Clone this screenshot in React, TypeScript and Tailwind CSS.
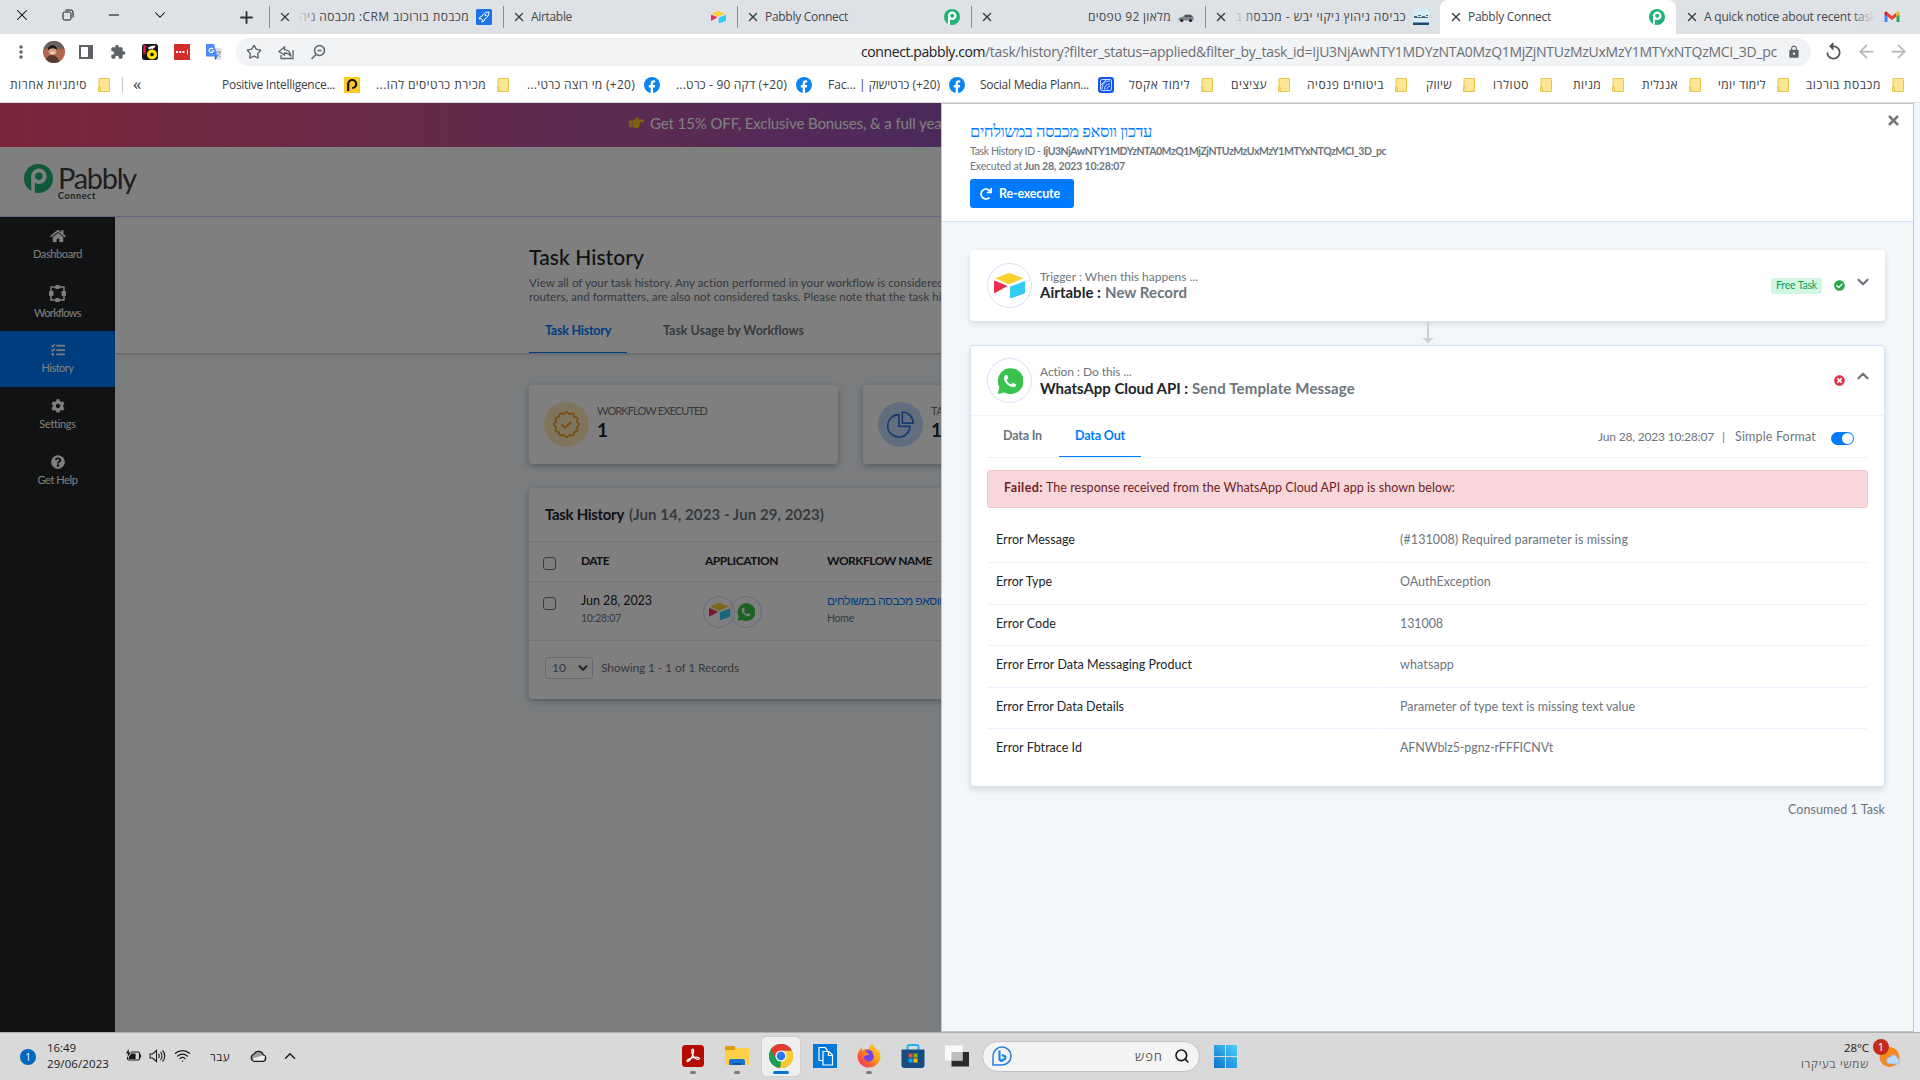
import { useLayoutEffect, useRef, useState } from "react";
import type { ReactNode } from "react";
import { ArrowLeft, ArrowRight, ChevronDown, ChevronUp, Minus, Plus, Search, Star, Wifi, X } from "lucide-react";
import {
  FaCheckCircle,
  FaCog,
  FaFirefoxBrowser,
  FaHandPointRight,
  FaHome,
  FaQuestionCircle,
  FaRedo,
  FaTasks,
  FaTimesCircle,
} from "react-icons/fa";
import { MdExtension, MdLock, MdMoreVert, MdReplay } from "react-icons/md";

const SEGOE = "font-['Open_Sans','Noto_Sans','Liberation_Sans',sans-serif]";
const AVENIR = "font-['Lato','Liberation_Sans',sans-serif]";

// Single line of text, tracked so that it fills the given width
function Line({ w, className = "", children }: { w: number; className?: string; children: ReactNode }) {
  const ref = useRef<HTMLSpanElement>(null);
  const [spacing, setSpacing] = useState(0);
  useLayoutEffect(() => {
    const el = ref.current;
    if (!el) return;
    const count = el.textContent?.length ?? 0;
    if (count > 1) setSpacing((w - el.getBoundingClientRect().width) / count);
  }, [w]);
  return (
    <span ref={ref} className={`inline-block shrink-0 whitespace-pre ${className}`} style={{ letterSpacing: spacing }}>
      {children}
    </span>
  );
}

/* ---------- logos ---------- */

const PabblyMark = ({ className = "" }: { className?: string }) => (
  <svg viewBox="0 0 32 32" className={`shrink-0 ${className}`}>
    <circle cx="16" cy="16" r="16" fill="#20b276" />
    <path d="M8 14v16.5a16 16 0 0 0 4 1.2V21z" fill="#fff" />
    <circle cx="16.4" cy="13.6" r="8.6" fill="#fff" />
    <circle cx="16.4" cy="13.6" r="4.1" fill="#20b276" />
  </svg>
);

const AirtableMark = ({ className = "" }: { className?: string }) => (
  <svg viewBox="0 0 93 76" className={`shrink-0 ${className}`}>
    <path d="M4 16 42 1q4-1 8 0l38 15-38 16q-4 2-9 0z" fill="#f8d030" />
    <path d="M0 25q1-3 4-2l37 16-38 21q-3 1-3-2z" fill="#ee3050" />
    <path d="M48 44q0-3 3-4l39-15q3-1 3 2v31q0 3-3 4L51 76q-3 1-3-2z" fill="#30ccf2" />
  </svg>
);

const WhatsAppMark = ({ className = "" }: { className?: string }) => (
  <svg viewBox="0 0 32 32" className={`shrink-0 ${className}`}>
    <path d="M0.8 32 3 23.8A15.9 15.9 0 1 1 9.2 30z" fill="#3ac34c" />
    <path
      transform="translate(6.2 5.8) scale(.84)"
      d="M6.62 10.79c1.44 2.83 3.76 5.14 6.59 6.59l2.2-2.2c.27-.27.67-.36 1.02-.24 1.6.7 2.9 1.2 4.2 1.9.6 2.2-1.2 4.1-4.2 4.4C9 20.6 3.2 14 2.7 8.6 2.7 5.6 4.4 3 7.2 3.4c.9 1.2 1.4 2.6 1.9 4.17.11.35.03.74-.25 1.02z"
      fill="#fff"
    />
  </svg>
);

const FacebookMark = () => (
  <svg viewBox="0 0 16 16" className="size-4">
    <circle cx="8" cy="8" r="8" fill="#0a84ee" />
    <path d="M6.7 16v-5.6H4.8V8h1.9V6.4c0-2 1.1-3.1 3-3.1l1.5.1v2h-1c-.9 0-1.2.5-1.2 1.2V8h2.2l-.4 2.4H9V16z" fill="#fff" />
  </svg>
);

const Folder = () => (
  <svg viewBox="0 0 16 16" className="size-4">
    <path d="M3 1.5h10.5v13H2.5v-4.5H3z" fill="#ffe694" stroke="#e8c64d" />
    <path d="M2.5 10h1.7v4.5" fill="none" stroke="#e8c64d" />
  </svg>
);

const PositiveMark = () => (
  <svg viewBox="0 0 16 16" className="size-4">
    <path d="M0 0h16v16H0z" fill="#fdc928" />
    <path d="M4.2 14V7a4 4 0 1 1 4 4" fill="none" stroke="#111" strokeWidth="2.2" />
  </svg>
);

const SocialMark = () => (
  <svg viewBox="0 0 16 16" className="size-4">
    <rect width="16" height="16" rx="3" fill="#1153fc" />
    <g fill="none" stroke="#fff" strokeWidth=".8">
      <rect x="2.5" y="2.5" width="11" height="11" rx="1.5" />
      <path d="M4 12c0-5 3-8 8-8M6.5 12.5c0-3.5 2-5.5 5.5-5.5M9 12.5c0-2 1-3 3-3M3 8l5-5" />
    </g>
  </svg>
);

const Rocket = () => (
  <svg viewBox="0 0 16 16" className="size-4">
    <rect width="16" height="16" rx="1.5" fill="#1a73e8" />
    <path d="M13 3c-3 0-5.5 1.5-7 4.2L4 8l-1 2 2.2-.4 1.2 1.2L6 13l2-1 .8-2C11.5 8.5 13 6 13 3z" fill="none" stroke="#fff" />
    <circle cx="9.7" cy="6.3" r="1" fill="#fff" />
  </svg>
);

const Car = () => (
  <svg viewBox="0 0 16 16" className="size-4">
    <path d="M.5 9.5C1.5 8 3.5 8 5 7.7L7 5.5h6L15.5 8v3.5h-15z" fill="#7d858c" />
    <path d="M6.5 7.7 7.8 6.3h2v1.4zM10.6 6.3h2l1.2 1.4h-3.2z" fill="#2b3036" />
    <circle cx="3.8" cy="11.5" r="1.6" fill="#222" />
    <circle cx="12.5" cy="11.5" r="1.6" fill="#222" />
  </svg>
);

const Laundry = () => (
  <svg viewBox="0 0 16 16" className="size-4">
    <path d="M0 0h16v13.5H0z" fill="#d7edf5" />
    <path d="M0 13.5h16V16H0z" fill="#1c4e72" />
    <path d="M1 7.5h3m1-1h3m1 1h3m1-1h2M1 8.5h14" stroke="#4a6675" strokeWidth="1.2" />
  </svg>
);

const Gmail = () => (
  <svg viewBox="0 0 16 16" className="size-4">
    <path d="M.5 5v8h3V6z" fill="#4285f4" />
    <path d="M12.5 6v7h3V5z" fill="#34a853" />
    <path d="M3.5 3.5v4L8 11l4.5-3.5v-4L8 7z" fill="#ea4335" />
    <path d="M.5 5.3V4c0-1.6 1.8-2 3-1v4.5z" fill="#c5221f" />
    <path d="M15.5 5.3V4c0-1.6-1.8-2-3-1v4.5z" fill="#fbbc04" />
  </svg>
);

/* ---------- browser chrome ---------- */

const Tab = ({
  title,
  w,
  icon,
  className = "w-[234px] border-l border-[#8a8d91] pl-2",
  rtl = false,
  fade = "",
}: {
  title: string;
  w: number;
  icon: ReactNode;
  className?: string;
  rtl?: boolean;
  fade?: string;
}) => (
  <div className={`flex h-[22px] shrink-0 items-center pr-[11px] ${className}`}>
    <X className="size-[14px] shrink-0 text-[#3c4043]" strokeWidth={2.4} />
    <div dir={rtl ? "rtl" : "ltr"} className={`relative ml-[5px] flex flex-1 overflow-hidden ${rtl ? "mr-[7px]" : "mr-[9px]"}`}>
      <Line w={w} className="text-[12px] leading-[18px] text-[#45484c]">
        {title}
      </Line>
      {fade && <div className={`absolute inset-y-0 w-6 from-[#dee1e6] to-transparent ${fade}`} />}
    </div>
    <div className="flex w-4 shrink-0 justify-center">{icon}</div>
  </div>
);

function TabStrip() {
  return (
    <div className="flex h-[34px] items-center bg-[#dee1e6]">
      <div className="flex w-[269px] shrink-0 items-center pb-[5px]">
        <X className="ml-[13px] size-[18px] text-black" strokeWidth={1.4} />
        <svg viewBox="0 0 12 12" className="ml-[31px] size-3" fill="none" stroke="#111">
          <rect x="1" y="3" width="8" height="8" rx="1.5" />
          <path d="M3.5 1H9a2 2 0 0 1 2 2v5.5" />
        </svg>
        <Minus className="ml-8 size-4 text-black" strokeWidth={1.5} />
        <ChevronDown className="ml-[29px] size-[18px] text-black" strokeWidth={1.4} />
        <Plus className="mt-[5px] ml-[68px] size-[19px] text-[#333]" strokeWidth={2.4} />
      </div>
      <Tab title="מכבסת בורוכוב CRM: מכבסה ניה" w={170} icon={<Rocket />} rtl fade="left-0 bg-linear-to-r" />
      <Tab title="Airtable" w={41} icon={<AirtableMark className="w-[15px]" />} />
      <Tab title="Pabbly Connect" w={83} icon={<PabblyMark className="size-4" />} />
      <Tab title="מלאון 92 טפסים" w={83} icon={<Car />} rtl />
      <Tab
        title="כביסה גיהוץ ניקוי יבש - מכבסת ב"
        w={171}
        icon={<Laundry />}
        rtl
        fade="left-0 bg-linear-to-r"
        className="w-[235px] border-l border-[#8a8d91] pl-2"
      />
      <div className="flex h-[34px] w-[236px] shrink-0 items-center rounded-t-lg bg-white">
        <Tab title="Pabbly Connect" w={83} icon={<PabblyMark className="size-4" />} className="w-[236px] pl-[9px]" />
      </div>
      <Tab
        title="A quick notice about recent task"
        w={172}
        icon={<Gmail />}
        fade="right-0 bg-linear-to-l"
        className="w-[235px] pl-[9px]"
      />
    </div>
  );
}

function Toolbar() {
  return (
    <div className="flex h-[35px] items-center bg-white">
      <div className="flex w-[236px] shrink-0 items-center">
        <MdMoreVert className="ml-[11px] size-5 text-[#5f6368]" />
        <svg viewBox="0 0 22 22" className="ml-3 size-[22px] rounded-full">
          <path d="M0 0h22v22H0z" fill="#b0664a" />
          <path d="M0 0h22v8H0z" fill="#6d625e" />
          <path d="M2 22c1-6 4-8 7-8s6 2 8 8z" fill="#5a3a34" />
          <circle cx="9.5" cy="10" r="4" fill="#d6a488" />
          <path d="M5 9.5c-1-7 10-7 9 0-2-3-6-3-9 0z" fill="#221a1a" />
          <path d="M7.5 12h4" stroke="#fff" />
        </svg>
        <svg viewBox="0 0 14 14" className="ml-[14px] size-[14px]">
          <path d="M1 1h12v12H1z" fill="#fff" stroke="#5f6368" strokeWidth="2" />
          <path d="M9 1h4v12H9z" fill="#5f6368" />
        </svg>
        <MdExtension className="ml-[17px] size-4 text-[#5f6368]" />
        <svg viewBox="0 0 16 16" className="ml-4 size-4">
          <rect width="16" height="16" rx="2.5" fill="#1b1320" />
          <path d="M2.5 1v9" stroke="#e31b3b" strokeWidth="2.5" />
          <circle cx="10" cy="10.5" r="3.4" fill="none" stroke="#ffe100" strokeWidth="3.2" />
          <path d="M6.5 4.5 11 2.5M9.5 4.5 13 2" stroke="#fff" strokeWidth="2" />
        </svg>
        <svg viewBox="0 0 16 16" className="ml-4 size-4">
          <rect width="16" height="16" rx="1" fill="#d32d27" />
          <path d="M2 8h8.5" stroke="#fff" strokeWidth="2" strokeDasharray="2 1.2" />
          <path d="M13.5 5.5v5" stroke="#fff" />
        </svg>
        <svg viewBox="0 0 16 16" className="ml-4 size-4">
          <path d="M6 4h9.5v12H9z" fill="#dfe3e8" />
          <path d="M0 0h8l3.5 12.5H0z" fill="#4c8bf5" />
          <path d="M7.2 5.2A2.2 2.2 0 1 0 7.5 7H5.5" fill="none" stroke="#fff" strokeWidth="1.1" />
          <path d="M10 8h5M12.5 7v1M14 8c-.5 2-2 3.5-3 4M11.5 10l3 3" fill="none" stroke="#70849c" strokeWidth=".8" />
          <path d="M8.5 12.5h3L9.5 16z" fill="#3059b8" />
        </svg>
      </div>
      <div className="flex h-7 w-[1575px] shrink-0 items-center rounded-full bg-[#f1f3f4]">
        <Star className="ml-[10px] size-4 text-[#5f6368]" strokeWidth={2} />
        <svg viewBox="0 0 16 16" className="ml-4 size-4" fill="none" stroke="#5f6368" strokeWidth="1.3">
          <path d="M6.5 3 1 7.5 6.5 11V9c3 0 5 1 6.5 3.5-.5-4-3-6.5-6.5-6.8z" />
          <path d="M3 11v3.5h12V6" />
        </svg>
        <svg viewBox="0 0 16 16" className="ml-4 size-4" fill="none" stroke="#5f6368" strokeWidth="1.5">
          <circle cx="9.5" cy="6.5" r="5" />
          <path d="M6 10.5 1.5 15M7.5 6.5h4" />
        </svg>
        <div className="flex flex-1 justify-end text-[14px] leading-5">
          <Line w={124} className="text-[#202124]">
            connect.pabbly.com
          </Line>
          <Line w={792} className="text-[#6b6f74]">
            /task/history?filter_status=applied&amp;filter_by_task_id=IjU3NjAwNTY1MDYzNTA0MzQ1MjZjNTUzMzUxMzY1MTYxNTQzMCI_3D_pc
          </Line>
        </div>
        <MdLock className="mr-[10px] ml-[10px] size-[14px] text-[#5f6368]" />
      </div>
      <MdReplay className="ml-3 size-[21px] text-[#505357]" />
      <ArrowLeft className="ml-3 size-[21px] text-[#b5b7ba]" strokeWidth={2} />
      <ArrowRight className="ml-[11px] size-[21px] text-[#b5b7ba]" strokeWidth={2} />
    </div>
  );
}

const bookmarks = [
  { box: "w-[215px]", text: "Positive Intelligence...", w: 113, icon: <PositiveMark /> },
  { box: "w-[151px]", text: "מכירת כרטיסים להו...", w: 110, icon: <Folder />, rtl: true },
  { box: "w-[149px]", text: "(20+) מי רוצה כרטי...", w: 108, icon: <FacebookMark />, rtl: true },
  { box: "w-[152px]", text: "(20+) דקה 90 - כרט...", w: 111, icon: <FacebookMark />, rtl: true },
  { box: "w-[153px]", text: "(20+) כרטישוק | Fac...\u200e", w: 112, icon: <FacebookMark />, rtl: true },
  { box: "w-[149px]", text: "Social Media Plann...", w: 109, icon: <SocialMark /> },
  { box: "w-[101px]", text: "לימוד אקסל", w: 61, icon: <Folder /> },
  { box: "w-[77px]", text: "עציצים", w: 36, icon: <Folder /> },
  { box: "w-[117px]", text: "ביטוחים פנסיה", w: 77, icon: <Folder /> },
  { box: "w-[68px]", text: "שיווק", w: 26, icon: <Folder /> },
  { box: "w-[77px]", text: "סטולרו", w: 36, icon: <Folder /> },
  { box: "w-[72px]", text: "מניות", w: 28, icon: <Folder /> },
  { box: "w-[77px]", text: "אנגלית", w: 36, icon: <Folder /> },
  { box: "w-[88px]", text: "לימוד יומי", w: 48, icon: <Folder /> },
  { box: "w-[115px]", text: "מכבסת בורכוב", w: 75, icon: <Folder /> },
];

function BookmarksBar() {
  return (
    <div className="flex h-[34px] items-center border-b border-[#d9dbde] bg-white pb-0.5 text-[12px] leading-4 text-[#3c4043]">
      <div className="flex w-[112px] shrink-0 items-center justify-end gap-[9px]">
        <Line w={77}>סימניות אחרות</Line>
        <Folder />
      </div>
      <div className="flex w-[33px] shrink-0 items-center">
        <div className="ml-[10px] h-4 w-px bg-[#c9cbce]" />
        <span className="mb-0.5 ml-[10px] text-[17px] leading-4">«</span>
      </div>
      {bookmarks.map((b) => (
        <div key={b.text} className={`flex shrink-0 items-center justify-end gap-[9px] ${b.box}`}>
          <div dir={b.rtl ? "rtl" : "ltr"} className="flex">
            <Line w={b.w}>{b.text}</Line>
          </div>
          {b.icon}
        </div>
      ))}
    </div>
  );
}

/* ---------- app behind the drawer ---------- */

const WorkflowIcon = () => (
  <svg viewBox="0 0 17 17" className="size-[17px]" fill="none" stroke="#fff" strokeWidth="1.5">
    <path d="M6 2H2v4M11 2h4v4M6 15H2v-4M11 15h4v-4" />
    <g fill="#fff" stroke="none">
      <rect x="6" y="0" width="5" height="4" rx="1.5" />
      <rect x="6" y="13" width="5" height="4" rx="1.5" />
      <rect x="0" y="6" width="4.5" height="5" rx="1" />
      <rect x="12.5" y="6" width="4.5" height="5" rx="1" />
    </g>
  </svg>
);

const menu = [
  { label: "Dashboard", w: 49, box: "h-14", icon: <FaHome className="h-[14px] w-4" /> },
  { label: "Workflows", w: 47, box: "h-[58px]", icon: <WorkflowIcon /> },
  { label: "History", w: 32, box: "h-14 bg-[#007bff]", icon: <FaTasks className="size-[14px]" /> },
  { label: "Settings", w: 36, box: "h-14", icon: <FaCog className="size-[14px]" /> },
  { label: "Get Help", w: 40, box: "h-14", icon: <FaQuestionCircle className="size-[14px]" /> },
];

function Sidebar() {
  return (
    <nav className="w-[115px] shrink-0 bg-[#202428] text-white">
      {menu.map((m) => (
        <div key={m.label} className={`flex flex-col items-center pt-3 ${m.box}`}>
          {m.icon}
          <Line w={m.w} className="mt-[3px] text-[11px] leading-[15px]">
            {m.label}
          </Line>
        </div>
      ))}
    </nav>
  );
}

// Outline of the twelve-lobed seal
const sealPath =
  Array.from({ length: 144 }, (_, i) => {
    const a = (i / 144) * Math.PI * 2;
    const r = 11.3 + 0.85 * Math.cos(12 * a);
    return `${i ? "L" : "M"}${(13 + r * Math.sin(a)).toFixed(2)} ${(13 - r * Math.cos(a)).toFixed(2)}`;
  }).join("") + "z";

const Seal = () => (
  <svg viewBox="0 0 26 26" className="size-[27px]" fill="none" stroke="#f0961e" strokeWidth="1.6">
    <path d={sealPath} />
    <path d="m8.5 13 3.2 3.2 5.8-6" strokeWidth="1.8" />
  </svg>
);

const Pie = () => (
  <svg viewBox="0 0 26 26" className="size-[27px]" fill="none" stroke="#2f6fe0" strokeWidth="1.5" strokeLinejoin="round">
    <path d="M11.5 3.5v11.3h10.7A10.8 10.8 0 1 1 11.5 3.5z" />
    <path d="M14.8 1v10.7h10.4A10.5 10.5 0 0 0 14.8 1z" />
  </svg>
);

const StatCard = ({ tint, icon, label, w }: { tint: string; icon: ReactNode; label: string; w: number }) => (
  <div className="flex h-[79px] w-[309px] shrink-0 rounded bg-white pt-[17px] pl-[15px] shadow-[0_2px_6px_rgba(40,60,90,0.35)]">
    <div className={`flex size-[45px] items-center justify-center rounded-full ${tint}`}>{icon}</div>
    <div className="ml-2 flex flex-col items-start">
      <Line w={w} className="mt-px text-[11px] leading-4 text-[#6c757d]">
        {label}
      </Line>
      <span className="text-[19px] leading-[21px] font-bold text-[#212529]">1</span>
    </div>
  </div>
);

const Checkbox = ({ className = "" }: { className?: string }) => (
  <div className={`size-[13px] rounded-[3px] border border-[#767676] bg-white ${className}`} />
);

function HistoryTable() {
  return (
    <div className="mt-6 h-[211px] w-[1000px] rounded bg-white shadow-[0_2px_6px_rgba(40,60,90,0.35)]">
      <div className="flex h-[54px] items-center gap-[5px] border-b border-[#e2e6f0] pb-px pl-4 text-[15px] leading-5 font-bold">
        <Line w={79} className="text-[#212529]">
          Task History
        </Line>
        <Line w={195} className="text-[#6c757d]">
          (Jun 14, 2023 - Jun 29, 2023)
        </Line>
      </div>
      <div className="flex h-10 items-center border-b border-[#e2e6f0] pl-[14px] text-[12px] leading-4 font-bold text-[#212529]">
        <Checkbox className="mt-1" />
        <div className="mb-0.5 ml-[25px] flex w-[124px]">
          <Line w={28}>DATE</Line>
        </div>
        <div className="mb-0.5 flex w-[122px]">
          <Line w={73}>APPLICATION</Line>
        </div>
        <Line w={105} className="mb-0.5">
          WORKFLOW NAME
        </Line>
      </div>
      <div className="flex h-[59px] border-b border-[#e2e6f0] pl-[14px]">
        <Checkbox className="mt-[15px]" />
        <div className="ml-[25px] flex w-[122px] flex-col items-start pt-2.5">
          <Line w={71} className="text-[12.5px] leading-[18px] text-[#212529]">
            Jun 28, 2023
          </Line>
          <Line w={40} className="text-[10.5px] leading-4 text-[#6c757d]">
            10:28:07
          </Line>
        </div>
        <div className="flex w-[124px] pt-[14px]">
          <div className="flex size-8 items-center justify-center rounded-full border border-[#d0d8f0] bg-white">
            <AirtableMark className="w-[21px]" />
          </div>
          <div className="-ml-[5px] flex size-8 items-center justify-center rounded-full border border-[#d0d8f0]">
            <WhatsAppMark className="size-[18px]" />
          </div>
        </div>
        <div className="flex flex-col items-start pt-2.5">
          <Line w={141} className="text-[12px] leading-[18px] text-[#007bff]">
            עדכון ווסאפ מכבסה במשולחים
          </Line>
          <Line w={27} className="text-[10.5px] leading-4 text-[#6c757d]">
            Home
          </Line>
        </div>
      </div>
      <div className="flex items-center pt-4 pl-4 text-[12px] leading-4 text-[#6c757d]">
        <div className="flex h-[22px] w-12 items-center justify-between rounded-[3px] border border-[#ced4da] pr-[2px] pl-[6px]">
          <Line w={14}>10</Line>
          <ChevronDown className="size-[14px] text-[#495057]" strokeWidth={4} />
        </div>
        <Line w={138} className="ml-2">
          Showing 1 - 1 of 1 Records
        </Line>
      </div>
    </div>
  );
}

function AppPage() {
  return (
    <div className={`relative flex h-full w-[1914px] flex-col overflow-hidden bg-[#f4f8fb] ${AVENIR}`}>
      <div className="flex h-11 shrink-0 items-center bg-linear-to-r from-[#f64a74] via-[#9653b9] via-50% to-[#5060e0] pb-[5px] pl-[629px] text-white">
        <FaHandPointRight className="size-[15px] text-[#fcc21b]" />
        <Line w={297} className="ml-[6px] text-[15px] leading-5">
          Get 15% OFF, Exclusive Bonuses, &amp; a full year
        </Line>
      </div>
      <header className="flex h-[70px] shrink-0 border-b border-[#c8daff] bg-white pt-[17px] pl-6">
        <PabblyMark className="size-[29px]" />
        <div className="ml-[5px] flex flex-col items-start text-[#3c3c40]">
          <Line w={78} className="text-[29px] leading-7 font-normal">
            Pabbly
          </Line>
          <Line w={38} className="text-[9px] leading-[8px] font-bold">
            Connect
          </Line>
        </div>
      </header>
      <div className="flex flex-1">
        <Sidebar />
        <main className="flex-1">
          <section className="h-[136px] bg-white pt-[26px] pl-[414px] shadow-[0_1px_3px_rgba(0,0,0,0.25)]">
            <Line w={115} className="text-[21px] leading-7 font-medium text-[#212529]">
              Task History
            </Line>
            <div className="mt-[5px] flex flex-col items-start text-[11.5px] leading-[14px] text-[#6c757d]">
              <Line w={415}>View all of your task history. Any action performed in your workflow is considered</Line>
              <Line w={438}>routers, and formatters, are also not considered tasks. Please note that the task history</Line>
            </div>
            <div className="mt-[5px] flex h-11 text-[12.5px] font-bold">
              <div className="flex w-[98px] items-center justify-center border-b border-[#007bff] pt-0.5 text-[#007bff]">
                <Line w={66}>Task History</Line>
              </div>
              <div className="ml-9 flex items-center pt-px text-[#6c757d]">
                <Line w={141}>Task Usage by Workflows</Line>
              </div>
            </div>
          </section>
          <div className="pt-8 pl-[414px]">
            <div className="flex gap-[25px]">
              <StatCard tint="bg-[#ffeab8]" icon={<Seal />} label="WORKFLOW EXECUTED" w={110} />
              <StatCard tint="bg-[#c4dafc]" icon={<Pie />} label="TASKS CONSUMED" w={92} />
            </div>
            <HistoryTable />
          </div>
        </main>
      </div>
      <div className="absolute inset-0 bg-black/50" />
    </div>
  );
}

/* ---------- drawer ---------- */

const AppBadge = ({ children }: { children: ReactNode }) => (
  <div className="flex size-[45px] shrink-0 items-center justify-center rounded-full border border-[#d5e1fa] bg-white">
    {children}
  </div>
);

const results = [
  { box: "h-[42px]", label: "Error Message", lw: 79, value: "(#131008) Required parameter is missing", vw: 228 },
  { box: "h-[42px]", label: "Error Type", lw: 56, value: "OAuthException", vw: 91 },
  { box: "h-[41px]", label: "Error Code", lw: 60, value: "131008", vw: 43 },
  { box: "h-[42px]", label: "Error Error Data Messaging Product", lw: 196, value: "whatsapp", vw: 54 },
  { box: "h-[41px]", label: "Error Error Data Details", lw: 128, value: "Parameter of type text is missing text value", vw: 235 },
  { box: "h-[41px]", label: "Error Fbtrace Id", lw: 86, value: "AFNWblz5-pgnz-rFFFICNVt", vw: 153 },
];

function TriggerCard() {
  return (
    <div className="flex h-[71px] items-center rounded bg-white pr-[13px] pl-[17px] shadow-[0_3px_6px_rgba(0,0,0,0.12)]">
      <AppBadge>
        <AirtableMark className="w-[31px]" />
      </AppBadge>
      <div className="ml-2 flex flex-1 flex-col items-start pb-[2px]">
        <Line w={158} className="text-[12px] leading-4 text-[#6c757d]">
          Trigger : When this happens ...
        </Line>
        <div className="flex gap-1 text-[15px] leading-[15px] font-bold">
          <Line w={61} className="text-[#212529]">
            Airtable :
          </Line>
          <Line w={82} className="text-[#6c757d]">
            New Record
          </Line>
        </div>
      </div>
      <div className="mt-px flex h-4 w-[51px] items-center justify-center rounded-[3px] bg-[#d1f7e2] text-[10.5px] text-[#0b9d5c]">
        <Line w={41}>Free Task</Line>
      </div>
      <FaCheckCircle className="ml-3 size-[11px] text-[#28a745]" />
      <ChevronDown className="mb-[7px] ml-[9px] size-[18px] text-[#6c757d]" strokeWidth={3} />
    </div>
  );
}

function ActionCard() {
  return (
    <div className="h-[442px] rounded border border-[#d5e1fa] bg-white shadow-[0_3px_6px_rgba(0,0,0,0.12)]">
      <div className="flex h-[70px] items-center border-b border-[#eef5fd] pr-3 pl-4">
        <AppBadge>
          <WhatsAppMark className="size-[26px]" />
        </AppBadge>
        <div className="ml-2 flex flex-1 flex-col items-start pb-px">
          <Line w={92} className="text-[12px] leading-4 text-[#6c757d]">
            Action : Do this ...
          </Line>
          <div className="flex gap-1 text-[15px] leading-[17px] font-bold">
            <Line w={148} className="text-[#212529]">
              WhatsApp Cloud API :
            </Line>
            <Line w={163} className="text-[#6c757d]">
              Send Template Message
            </Line>
          </div>
        </div>
        <FaTimesCircle className="mb-px size-[11px] text-[#dc3545]" />
        <ChevronUp className="mb-2.5 ml-[9px] size-[18px] text-[#6c757d]" strokeWidth={3} />
      </div>
      <div className="mx-4 flex h-[42px] items-center border-b border-[#eaf3fd] text-[12.5px] leading-4 text-[#6c757d]">
        <div className="flex w-[72px] pb-[2px] pl-4 font-bold">
          <Line w={39}>Data In</Line>
        </div>
        <div className="flex h-[41px] w-[82px] items-center justify-center border-b border-[#007bff] pb-px font-bold text-[#007bff]">
          <Line w={50}>Data Out</Line>
        </div>
        <div className="ml-auto flex items-center">
          <Line w={116} className="text-[12px]">
            Jun 28, 2023 10:28:07
          </Line>
          <span className="ml-2 text-[12px]">|</span>
          <Line w={81} className="ml-[10px]">
            Simple Format
          </Line>
        </div>
        <div className="mt-[4px] mr-[14px] ml-[15px] flex h-[13px] w-[23px] justify-end rounded-full bg-[#007bff] p-px">
          <div className="size-[11px] rounded-full bg-white" />
        </div>
      </div>
      <div className="mx-4 mt-3 flex h-[38px] items-center gap-[3px] rounded-[3px] border border-[#f3c6cb] bg-[#f7d7da] pb-0.5 pl-4 text-[12.5px] leading-4 text-[#721c24]">
        <Line w={39} className="font-bold">
          Failed:
        </Line>
        <Line w={409}>The response received from the WhatsApp Cloud API app is shown below:</Line>
      </div>
      <div className="mx-[17px] mt-[13px] text-[12.5px] leading-4">
        {results.map((r, i) => (
          <div key={r.label} className={`flex gap-px ${r.box}`}>
            <div className={`flex w-[391px] items-center pb-[3px] pl-2 text-[#212529] ${i < 5 ? "border-b border-[#eaf3fd]" : ""}`}>
              <Line w={r.lw}>{r.label}</Line>
            </div>
            <div className={`flex flex-1 items-center pb-[3px] pl-5 text-[#6c757d] ${i < 5 ? "border-b border-[#eaf3fd]" : ""}`}>
              <Line w={r.vw}>{r.value}</Line>
            </div>
          </div>
        ))}
      </div>
    </div>
  );
}

function Drawer() {
  return (
    <aside className={`absolute inset-y-0 left-[941px] w-[973px] border border-[#c4c6c8] bg-[#f4f7fa] ${AVENIR}`}>
      <div className="flex h-[118px] justify-between border-b border-[#d5e1fa] bg-white pl-7">
        <div className="flex flex-col items-start pt-4 text-[10.5px] leading-[14px] text-[#6c757d]">
          <Line w={182} className="font-['Liberation_Serif',serif] text-[16.5px] leading-6 text-[#007bff]">
            עדכון ווסאפ מכבסה במשולחים
          </Line>
          <div className="flex">
            <Line w={73}>Task History ID - </Line>
            <Line w={343} className="font-bold">
              IjU3NjAwNTY1MDYzNTA0MzQ1MjZjNTUzMzUxMzY1MTYxNTQzMCI_3D_pc
            </Line>
          </div>
          <div className="mt-px flex gap-0.5">
            <Line w={52}>Executed at</Line>
            <Line w={101} className="font-bold">
              Jun 28, 2023 10:28:07
            </Line>
          </div>
          <button className="mt-[6px] flex h-[29px] w-[104px] items-center rounded-[3px] bg-[#007bff] pl-[10px] text-[12.5px] font-bold text-white">
            <FaRedo className="mr-[7px] size-3" />
            <Line w={61}>Re-execute</Line>
          </button>
        </div>
        <X className="mt-[9px] mr-3 size-[15px] text-[#7a7a7a]" strokeWidth={4.2} />
      </div>
      <div className="flex flex-col pt-7 pr-7 pl-7">
        <TriggerCard />
        <svg viewBox="0 0 12 24" className="h-6 w-3 self-center">
          <path d="M5 0h2v17h4.5L6 22.5.5 17H5z" fill="#cdd2d8" />
        </svg>
        <ActionCard />
        <Line w={97} className="mt-[15px] self-end text-[12.5px] leading-4 text-[#6c757d]">
          Consumed 1 Task
        </Line>
      </div>
    </aside>
  );
}

/* ---------- taskbar ---------- */

const AcrobatIcon = () => (
  <svg viewBox="0 0 22 22" className="size-[22px]">
    <rect width="22" height="22" rx="3.5" fill="#b30b00" />
    <path d="M10 4.5c2-1.5 2 3 .5 6-1.5 3.3-4 7-5.3 6-1.5-1.5 4.3-4.3 9.3-4.3 3.5 0 3.5 2.3 1.2 2.1C12 14 9 8.5 10 4.5z" fill="none" stroke="#fff" strokeWidth="1.3" />
  </svg>
);

const ExplorerIcon = () => (
  <svg viewBox="0 0 24 22" className="h-[22px] w-6">
    <path d="M0 2a1 1 0 0 1 1-1h8l2 2.5V6H0z" fill="#dd9c0b" />
    <path d="M0 5h9l1.5-2H23a1 1 0 0 1 1 1v16H0z" fill="#ffcf48" />
    <path d="M4 20v-4a2 2 0 0 1 2-2h12a2 2 0 0 1 2 2v4z" fill="#1575d0" />
    <path d="M8 18h8v2H8z" fill="#0b4f94" />
  </svg>
);

const ChromeIcon = () => (
  <svg viewBox="0 0 24 24" className="size-6">
    <circle cx="12" cy="12" r="12" fill="#1e9e50" />
    <path d="M12 12V6.5h10.7A12 12 0 0 1 11 24z" fill="#fcc931" />
    <path d="M12 12 7.2 14.7 1.6 6A12 12 0 0 1 22.7 6.5H12z" fill="#e33b2e" />
    <path d="m7.3 14.8 4.7 2.5L11 24A12 12 0 0 1 1.6 6z" fill="#1e9e50" />
    <circle cx="12" cy="12" r="5.6" fill="#fff" />
    <circle cx="12" cy="12" r="4.4" fill="#2a79ee" />
  </svg>
);

const PhoneLinkIcon = () => (
  <svg viewBox="0 0 24 24" className="size-6">
    <path d="M0 0h24v24H0z" fill="#0078d7" />
    <g stroke="#fff" strokeWidth="1.2" fill="#0078d7">
      <path d="M6 3.5h6l2 2v11H6z" />
      <path d="M10 7.5h6l3.5 3.5v10H10z" />
      <path d="M15.5 7.5v4h4" fill="none" />
    </g>
  </svg>
);

const FirefoxIcon = () => (
  <svg viewBox="0 0 24 24" className="size-6">
    <defs>
      <linearGradient id="fox" x1="1" y1="0" x2="0" y2="1">
        <stop offset="0" stopColor="#ffe226" />
        <stop offset=".5" stopColor="#ff8a1c" />
        <stop offset="1" stopColor="#f5156c" />
      </linearGradient>
    </defs>
    <circle cx="12" cy="12.5" r="7.5" fill="#7542e5" />
    <FaFirefoxBrowser size={24} fill="url(#fox)" />
  </svg>
);

const StoreIcon = () => (
  <svg viewBox="0 0 24 24" className="size-6">
    <path d="M6.5 6V3a2 2 0 0 1 2-2h7a2 2 0 0 1 2 2v3" fill="none" stroke="#1fb3ee" strokeWidth="2" />
    <path d="M.5 5.5h23V21a3 3 0 0 1-3 3h-17a3 3 0 0 1-3-3z" fill="#164c82" />
    <path d="M7.5 9.5h4v4h-4z" fill="#f25022" />
    <path d="M12.5 9.5h4v4h-4z" fill="#7fba00" />
    <path d="M7.5 14.5h4v4h-4z" fill="#00a4ef" />
    <path d="M12.5 14.5h4v4h-4z" fill="#ffb900" />
  </svg>
);

const TaskViewIcon = () => (
  <svg viewBox="0 0 24 24" className="size-6">
    <path d="M6.5 8H24v14.5H6.5z" fill="#2a2a2a" />
    <path d="M0 1.5h17.5v15H0z" fill="#fafafa" />
    <path d="M6.5 8h11v8.5h-11z" fill="#bdbdbd" />
  </svg>
);

const BingIcon = () => (
  <svg viewBox="0 0 20 20" className="size-5" fill="none">
    <path d="M1 19v-9a9 9 0 1 1 9 9z" stroke="#2a7de0" strokeWidth="1.5" />
    <path d="M7.5 4.5v9l2 1.500 3.800-2.500v-2L9.800 9" stroke="#1d86e6" strokeWidth="2.2" strokeLinejoin="round" />
  </svg>
);

const pinned = [
  { name: "acrobat", icon: <AcrobatIcon />, mark: "h-[3px] w-1.5 bg-[#7d7d7d]" },
  { name: "explorer", icon: <ExplorerIcon />, mark: "h-[3px] w-1.5 bg-[#7d7d7d]" },
  { name: "chrome", icon: <ChromeIcon />, mark: "h-[3px] w-4 bg-[#0078d4]", tile: "bg-[#efefef] shadow-[0_0_1px_#888]" },
  { name: "phone", icon: <PhoneLinkIcon />, mark: "h-[3px]" },
  { name: "firefox", icon: <FirefoxIcon />, mark: "h-[3px] w-1.5 bg-[#7d7d7d]" },
  { name: "store", icon: <StoreIcon />, mark: "h-[3px]" },
  { name: "taskview", icon: <TaskViewIcon />, mark: "h-[3px]" },
];

function Taskbar() {
  return (
    <div className="flex h-12 items-center border-t border-[#aeaeae] bg-[#d9d9d9] text-[11.5px] leading-4 text-[#1b1b1b]">
      <div className="flex w-[671px] shrink-0 items-center">
        <div className="ml-5 flex size-4 items-center justify-center rounded-full bg-[#0067c0] text-[10px] text-white">1</div>
        <div className="ml-[11px] flex w-[78px] flex-col items-start pb-px">
          <Line w={29}>16:49</Line>
          <Line w={62}>29/06/2023</Line>
        </div>
        <svg viewBox="0 0 17 16" className="mb-0.5 h-4 w-[17px]" fill="none" stroke="#1b1b1b" strokeWidth="1.2">
          <path d="M6 4h7a1.5 1.5 0 0 1 1.5 1.5v5A1.5 1.5 0 0 1 13 12H4a1.5 1.5 0 0 1-1.5-1.5V9M15.5 6.5v3" />
          <path d="M6.5 6H10v4.5H4.5V9z" fill="#1b1b1b" />
          <path d="M3.5 1 1 5.5h2L2.5 9 6 4.5H4z" fill="#1b1b1b" stroke="none" />
        </svg>
        <svg viewBox="0 0 17 16" className="mb-0.5 ml-[7px] h-4 w-[17px]" fill="none" stroke="#1b1b1b" strokeWidth="1.1">
          <path d="M1 6v4h2.5L7.5 13.5v-11L3.5 6zM9.5 6c1 1 1 3 0 4M11.5 4.2c2 2 2 5.6 0 7.6M13.5 2.5c3 3 3 8 0 11" />
        </svg>
        <Wifi className="mb-0.5 ml-2 size-[17px]" strokeWidth={1.8} />
        <Line w={20} className="ml-[19px]">
          עבר
        </Line>
        <svg viewBox="0 0 17 12" className="mb-0.5 ml-5 h-3 w-[17px]">
          <path d="M4.5 11.3a3.7 3.7 0 0 1-.3-7.3 4.8 4.8 0 0 1 9 1.2 3.1 3.1 0 0 1 0 6.1z" fill="#9d9d9d" stroke="#1b1b1b" strokeWidth="1.2" />
          <path d="M3 10.5c0-2 1.5-3 3-3 3 0 6-3.5 9-1l-1.5 4z" fill="#eee" />
        </svg>
        <ChevronUp className="mb-0.5 ml-[14px] size-[18px]" strokeWidth={1.9} />
      </div>
      <div className="flex shrink-0">
        {pinned.map((p) => (
          <div key={p.name} className="flex w-11 justify-center">
            <div className={`flex h-[39px] w-[38px] flex-col items-center rounded pt-[7px] ${p.tile ?? ""}`}>
              <div className="flex h-6 items-center">{p.icon}</div>
              <div className={`mt-[3px] rounded-full ${p.mark}`} />
            </div>
          </div>
        ))}
      </div>
      <div className="mb-px ml-[3px] flex h-[31px] w-[218px] shrink-0 items-center rounded-full border border-[#c2c2c2] bg-[#f4f4f4] pr-[9px] pl-[9px]">
        <BingIcon />
        <Line w={28} className="ml-auto text-[13px] text-[#5c5c5c]">
          חפש
        </Line>
        <Search className="ml-[11px] size-4" strokeWidth={2.4} />
      </div>
      <svg viewBox="0 0 23 23" className="ml-[14px] size-[23px] shrink-0">
        <defs>
          <linearGradient id="win" x1="1" y1="0" x2="0" y2="1">
            <stop offset="0" stopColor="#4dcffb" />
            <stop offset="1" stopColor="#0a70cc" />
          </linearGradient>
        </defs>
        <path d="M0 0h11v11H0zM12 0h11v11H12zM0 12h11v11H0zM12 12h11v11H12z" fill="url(#win)" />
      </svg>
      <div className="ml-auto flex flex-col items-end pb-px">
        <Line w={25}>28°C</Line>
        <Line w={68} className="text-[#5c5c5c]">
          שמשי בעיקרו
        </Line>
      </div>
      <div className="relative mr-[19px] mb-[5px] ml-[6px] h-[30px] w-[26px]">
        <svg viewBox="0 0 26 30" className="h-[30px] w-[26px]">
          <circle cx="14.5" cy="18" r="10" fill="#f58a1f" />
          <path d="M15 25a3.5 3.5 0 0 1 0-7 4 4 0 0 1 7.5 1.5 2.8 2.8 0 0 1 0 5.5z" fill="#bcd8fb" stroke="#7fa9ea" strokeWidth=".6" />
        </svg>
        <div className="absolute top-0 -left-0.5 flex size-4 items-center justify-center rounded-full bg-[#c42b1c] text-[11px] text-white">1</div>
      </div>
    </div>
  );
}

export default function App() {
  return (
    <div className={`flex h-[1080px] w-[1920px] flex-col overflow-hidden bg-white ${SEGOE}`}>
      <TabStrip />
      <Toolbar />
      <BookmarksBar />
      <div className="relative h-[929px] bg-[#eff6fe]">
        <AppPage />
        <Drawer />
      </div>
      <Taskbar />
    </div>
  );
}
